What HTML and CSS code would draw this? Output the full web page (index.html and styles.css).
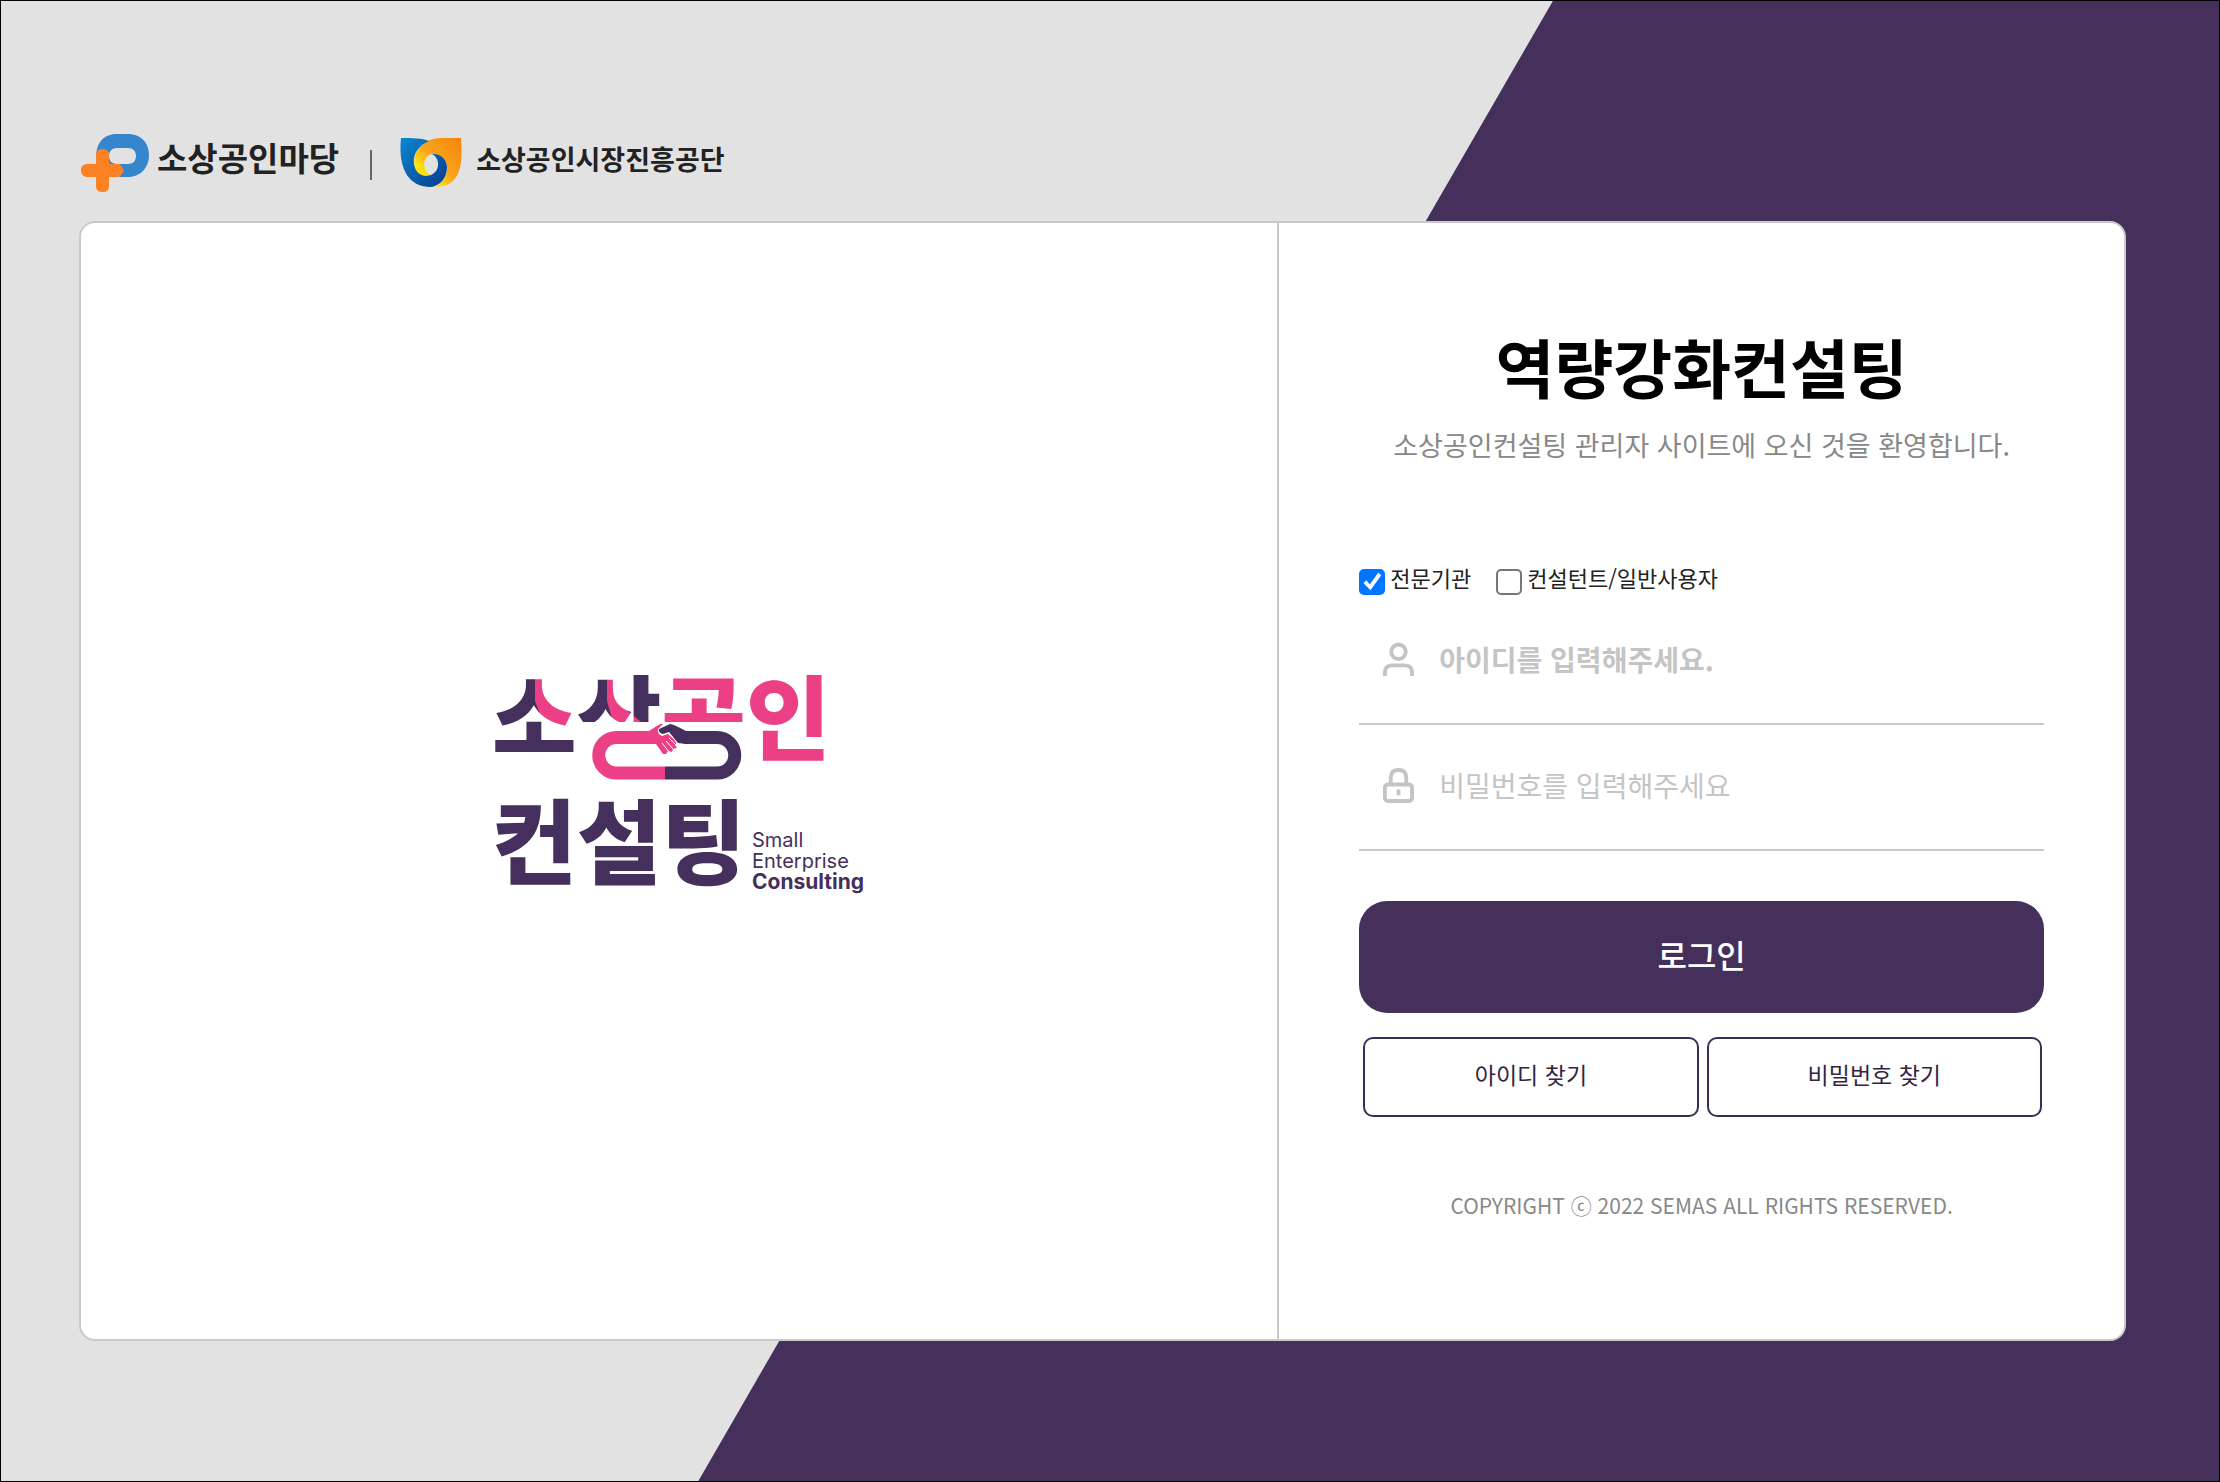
FILE: index.html
```html
<!DOCTYPE html>
<html lang="ko">
<head>
<meta charset="utf-8">
<meta name="viewport" content="width=device-width, initial-scale=1">
<title>역량강화컨설팅 로그인</title>
<link rel="stylesheet" href="styles.css">
</head>
<body>
<div class="page">
  <header class="partners">
    <a class="partner partner-madang" href="#">
      <svg class="madang-mark" viewBox="0 0 68 58" aria-hidden="true">
        <path fill="#3586cc" fill-rule="evenodd" d="M15 25C15 9 22 0 36 0H47C60 0 68 9 68 21S60 43 47 43H30L27 20ZM36 14C31 14 28 17 28 22C28 27 31 30 36 30H47C52 30 55 27 55 22S52 14 47 14Z"/>
        <path fill="#fb8122" d="M15 21Q15 15 21.500 15Q28 15 28 21V30H39L43 36.500L39 43H28V52Q28 58 21.500 58Q15 58 15 52V43H6Q0 43 0 36.500Q0 30 6 30H15Z"/>
      </svg>
      <span>소상공인마당</span>
    </a>
    <span class="divider"></span>
    <a class="partner partner-semas" href="#">
      <svg class="semas-mark" viewBox="0 0 62 50" aria-hidden="true">
        <defs>
          <linearGradient id="blue" x1="0" y1="0" x2="1" y2="1"><stop offset="0" stop-color="#0a86d2"/><stop offset="1" stop-color="#0a3c8c"/></linearGradient>
          <linearGradient id="orange" x1="1" y1="0" x2="0" y2="1"><stop offset="0" stop-color="#f4830c"/><stop offset=".5" stop-color="#f9a51c"/><stop offset=".75" stop-color="#ffe40a"/></linearGradient>
        </defs>
        <path fill="url(#orange)" d="M61 0C63 24 62 49 35 49C42 45 48 38 47 28C46 20 39 16 32 16C25 17 22 26 26 33C28 37 32 38 35 37C30 41 20 40 16 33C10 20 19 1 40 0Z"/>
        <path fill="url(#blue)" d="M2 0C13 0 22 0 29 3C17 8 11 19 15 30C19 40 31 40 36 33C40 27 38 19 32 16C40 15 47 21 47 29C47 41 39 49 29 49C7 48-2 28 1 0Z"/>
      </svg>
      <span>소상공인시장진흥공단</span>
    </a>
  </header>

  <main class="card">
    <section class="brand">
      <svg class="brand-logo" viewBox="0 0 400 260" role="img" aria-label="소상공인컨설팅 Small Enterprise Consulting">
        <defs>
          <pattern id="tone" patternUnits="userSpaceOnUse" x="0" y="0" width="400" height="260">
            <rect width="400" height="260" fill="#452f5c"/>
            <path fill="#eb4085" d="M56 0H98V74H66L62 66L56 50ZM128 0H149V60L162 71H134L128 50ZM181 0H400V260H181Z"/>
          </pattern>
          <clipPath id="upper"><path d="M0 0H98V130H0ZM98 0H265V71H98ZM265 0H400V130H265Z"/></clipPath>
        </defs>
        <g clip-path="url(#upper)"><text class="brand-word" x="13" y="102" fill="url(#tone)">소상공인</text></g>
        <g fill="none" stroke-width="13">
          <path stroke="#eb4085" d="M174 86.500H137.500A17.700 17.700 0 0 0 137.500 122H186"/>
          <path stroke="#452f5c" d="M205 86.500H238A17.700 17.700 0 0 1 238 122H186"/>
        </g>
        <path fill="#452f5c" d="M207 93L199 92L190 81L184 83Q179 82 180 78L191 73Q194 73 207 80Z"/>
        <path fill="#eb4085" d="M170 80L181 73H184L179 78Q178 83 183 85L189 83L198 91L196 94L198 97L194 98L193 101L189 100L187 103L184 103L177 93H170Z"/>
        <path stroke="#fff" fill="none" d="M187 90L194 98M183 92L190 101M190 87L197 94M189 81L199 93"/>
        <text class="brand-word" x="13" y="226" fill="#452f5c">컨설팅</text>
        <g class="brand-latin">
          <text x="273" y="196">Small</text>
          <text x="273" y="217">Enterprise</text>
          <text class="strong" x="273" y="238">Consulting</text>
        </g>
      </svg>
    </section>

    <section class="login">
      <h1>역량강화컨설팅</h1>
      <p class="welcome">소상공인컨설팅 관리자 사이트에 오신 것을 환영합니다.</p>
      <form>
        <div class="roles">
          <label><input type="checkbox" checked><span>전문기관</span></label>
          <label><input type="checkbox"><span>컨설턴트/일반사용자</span></label>
        </div>
        <div class="field field-id">
          <label for="user-id" aria-label="아이디">
            <svg viewBox="0 0 32 36" aria-hidden="true"><circle cx="16" cy="10" r="7.500"/><path d="M2 35V31Q2 24 10 24H22Q30 24 30 31V35"/></svg>
          </label>
          <input id="user-id" type="text" placeholder="아이디를 입력해주세요.">
        </div>
        <div class="field">
          <label for="user-pw" aria-label="비밀번호">
            <svg viewBox="0 0 32 36" aria-hidden="true"><rect x="2" y="17" width="28" height="17" rx="3"/><path d="M8 17V10Q8 2 16 2T24 10V17M16 22V28"/></svg>
          </label>
          <input id="user-pw" type="password" placeholder="비밀번호를 입력해주세요">
        </div>
        <button class="submit" type="submit">로그인</button>
        <div class="finders">
          <button type="button">아이디 찾기</button>
          <button type="button">비밀번호 찾기</button>
        </div>
      </form>
      <footer>COPYRIGHT ⓒ 2022 SEMAS ALL RIGHTS RESERVED.</footer>
    </section>
  </main>
</div>
</body>
</html>
```

FILE: styles.css
```css
* { box-sizing: border-box; }

body {
  margin: 0;
  color: #222;
  font-family: "Noto Sans CJK KR", "Noto Sans", sans-serif;
}

.page {
  min-height: 100vh;
  padding: 131px 93px 140px 78px;
  border: 1px solid #000;
  background: linear-gradient(120deg, #e3e2e3 calc(50% + 13px), #45305c calc(50% + 14px));
}

.partners {
  display: flex;
  align-items: center;
  height: 60px;
  margin-bottom: 29px;
  padding: 2px 0 0 2px;
}

.partner {
  display: flex;
  align-items: center;
  color: #222;
  font-weight: 700;
  line-height: 40px;
  text-decoration: none;
}

.partner span { padding-bottom: 8px; }
.partner-madang { gap: 8px; font-size: 33px; }
.partner-madang span { padding-bottom: 12px; }
.partner-semas { gap: 14px; font-size: 27px; }
.madang-mark { width: 68px; height: 58px; }
.semas-mark { width: 62px; height: 50px; }

.divider {
  width: 2px;
  height: 30px;
  margin: 4px 28px 0 31px;
  background: #666;
}

.card {
  display: grid;
  grid-template-columns: minmax(0, 1200fr) minmax(0, 846fr);
  min-height: 1120px;
  border: 2px solid #cbcacb;
  border-radius: 16px;
  background: #fff;
}

.brand {
  display: flex;
  align-items: center;
  justify-content: center;
  border-right: 2px solid #cbcacb;
}

.brand-logo { width: 400px; height: 260px; }
.brand-word { font-size: 92px; font-weight: 900; }
.brand-latin { fill: #45305c; font-family: Inter, sans-serif; font-size: 20px; }
.brand-latin .strong { font-size: 21px; font-weight: 700; }

.login {
  padding: 96px 80px 80px;
  text-align: center;
}

h1 {
  margin: 0;
  color: #000;
  font-size: 64px;
  font-weight: 700;
  line-height: 92px;
}

.welcome {
  margin: 14px 0 0;
  color: #888;
  font-size: 27px;
  line-height: 40px;
}

.roles {
  display: flex;
  gap: 25px;
  margin-top: 96px;
  font-size: 22px;
  line-height: 32px;
}

.roles label { display: flex; gap: 5px; }

.roles input {
  appearance: none;
  width: 26px;
  height: 26px;
  margin: 8px 0 0;
  border: 2px solid #767676;
  border-radius: 5px;
  background: #fff;
}

.roles input:checked {
  border-color: #0075ff;
  background: #0075ff;
}

.roles input:checked::before {
  display: block;
  width: 22px;
  height: 22px;
  background: #fff;
  clip-path: polygon(10% 54%, 24% 42%, 39% 61%, 77% 8%, 91% 19%, 42% 88%);
  content: "";
}

.field {
  display: flex;
  align-items: center;
  gap: 25px;
  height: 126px;
  padding: 0 24px 4px;
  border-bottom: 2px solid #cbcacb;
}

.field-id { margin-top: 4px; }
.field label { display: flex; }

.field svg {
  width: 31px;
  height: 35px;
  fill: none;
  stroke: #c4c4c4;
  stroke-width: 4;
}

.field input {
  flex: 1;
  width: 100%;
  min-width: 0;
  padding: 0;
  border: 0;
  outline: 0;
  background: none;
  font: inherit;
  font-size: 28px;
  line-height: 40px;
}

.field-id input { font-weight: 700; }
.field input::placeholder { color: #c4c4c4; opacity: 1; }

button { font-family: inherit; cursor: pointer; }

.submit {
  width: 100%;
  height: 112px;
  margin-top: 50px;
  padding-bottom: 8px;
  border: 0;
  border-radius: 28px;
  background: #45305c;
  color: #fff;
  font-size: 32px;
  font-weight: 500;
}

.finders {
  display: grid;
  grid-template-columns: 1fr 1fr;
  gap: 8px;
  padding: 24px 2px 0 4px;
}

.finders button {
  height: 80px;
  padding-bottom: 8px;
  border: 2px solid #3b2d58;
  border-radius: 10px;
  background: #fff;
  color: #332542;
  font-size: 23px;
}

footer {
  margin-top: 72px;
  color: #888;
  font-size: 21px;
  line-height: 32px;
}
```
